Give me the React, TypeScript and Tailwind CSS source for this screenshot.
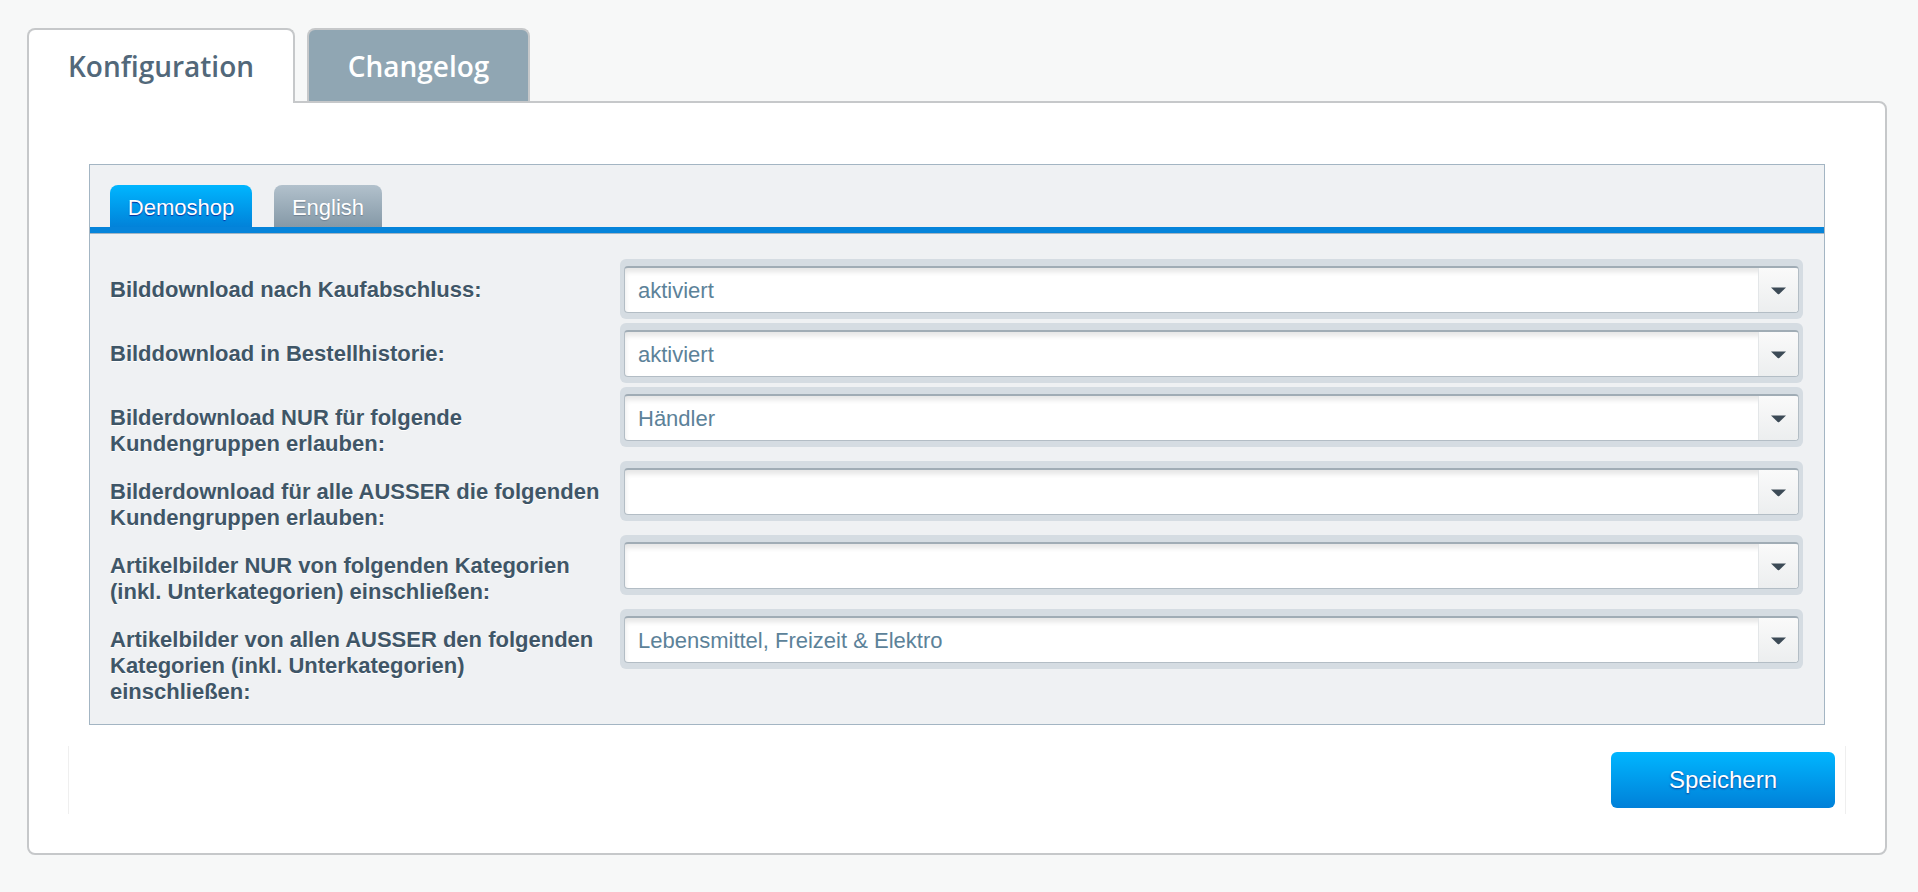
import type { ReactNode } from "react";

type Row = { label: ReactNode; value: string };

const rows: Row[] = [
  { label: "Bilddownload nach Kaufabschluss:", value: "aktiviert" },
  { label: "Bilddownload in Bestellhistorie:", value: "aktiviert" },
  { label: "Bilderdownload NUR für folgende Kundengruppen erlauben:", value: "Händler" },
  { label: "Bilderdownload für alle AUSSER die folgenden Kundengruppen erlauben:", value: "" },
  { label: "Artikelbilder NUR von folgenden Kategorien (inkl. Unterkategorien) einschließen:", value: "" },
  {
    label: "Artikelbilder von allen AUSSER den folgenden Kategorien (inkl. Unterkategorien) einschließen:",
    value: "Lebensmittel, Freizeit & Elektro",
  },
];

// Select — the "well" around a combo box with the grey arrow button on the right.
function Select({ value }: { value: string }) {
  return (
    <div className="h-[60px] flex-1 rounded-[6px] bg-[#d5dce2] px-[4px] pb-[6px] pt-[7px]">
      <div className="flex h-[47px] overflow-hidden rounded-[4px] border border-t-2 border-[#b3bdc5] border-t-[#a0acb5] bg-white shadow-[inset_0_4px_5px_rgba(0,0,0,0.10)]">
        <div className="flex flex-1 items-center pl-[13px] text-[22px] text-[#5c8299]">{value}</div>
        <div className="flex w-[40px] items-center justify-center border-l border-[#e3e6e8] bg-gradient-to-b from-[#fafafa] to-[#eceeef]">
          <svg width="17" height="9" viewBox="0 0 17 9">
            <path d="M1 1.5 H16 L9.3 8 Q8.5 8.6 7.7 8 Z" fill="#3c4a56" />
          </svg>
        </div>
      </div>
    </div>
  );
}

export default function App() {
  return (
    <div className="min-h-screen bg-[#f7f8f8] pl-[27px] pr-[31px] pt-[28px] font-['Liberation_Sans',Arial,sans-serif]">
      {/* Top-level tabs */}
      <div className="flex items-start gap-[12px] font-['Open_Sans',sans-serif] text-[28px] font-semibold">
        <div className="relative z-10 -mb-[2px] flex h-[75px] w-[268px] items-center justify-center rounded-t-[8px] border-2 border-b-0 border-[#c6c8ca] bg-white pb-[2px] text-[#52687a]">
          Konfiguration
        </div>
        <div className="flex h-[73px] w-[223px] items-center justify-center rounded-t-[8px] border-2 border-b-0 border-[#c6c8ca] bg-[#90a6b3] text-white">
          Changelog
        </div>
      </div>

      <div className="rounded-b-[8px] rounded-tr-[8px] border-2 border-[#c6c8ca] bg-white px-[60px] pb-[39px] pt-[61px]">
        <div className="border border-[#a3b5c3] bg-[#eff1f3]">
          {/* Shop / language tabs */}
          <div className="flex gap-[22px] px-[20px] pt-[20px] text-[22px]">
            <div className="flex h-[42px] w-[142px] items-center justify-center rounded-t-[8px] bg-gradient-to-b from-[#00b6ff] to-[#0282d9] pt-[3px] text-white [text-shadow:0_1px_1px_#0a2fa0]">
              Demoshop
            </div>
            <div className="flex h-[42px] w-[108px] items-center justify-center rounded-t-[8px] bg-gradient-to-b from-[#b2c1cc] to-[#8599a7] pt-[3px] text-white [text-shadow:0_1px_1px_#6f8191]">
              English
            </div>
          </div>
          <div className="h-[6px] bg-[#0584da]" />
          <div className="h-px bg-[#a3b5c3]" />

          <div className="pb-[15px] pl-[20px] pr-[21px] pt-[25px]">
            {rows.map((r, i) => (
              <div key={i} className="flex items-start gap-[14px] pb-[4px]">
                <div className="w-[496px] shrink-0 pt-[18px] text-[22px] font-bold leading-[26px] text-[#3f5667] [text-shadow:0_1px_0_#fff]">
                  {r.label}
                </div>
                <Select value={r.value} />
              </div>
            ))}
          </div>
        </div>

        <div className="-mx-[21px] mt-[21px] flex h-[68px] items-center justify-end border-x border-[#efefef] pr-[10px]">
          <button className="h-[56px] w-[224px] rounded-[6px] bg-gradient-to-b from-[#00b6ff] to-[#0180d8] text-[24px] text-white [text-shadow:0_1px_2px_#0a3f9a]">
            Speichern
          </button>
        </div>
      </div>
    </div>
  );
}
